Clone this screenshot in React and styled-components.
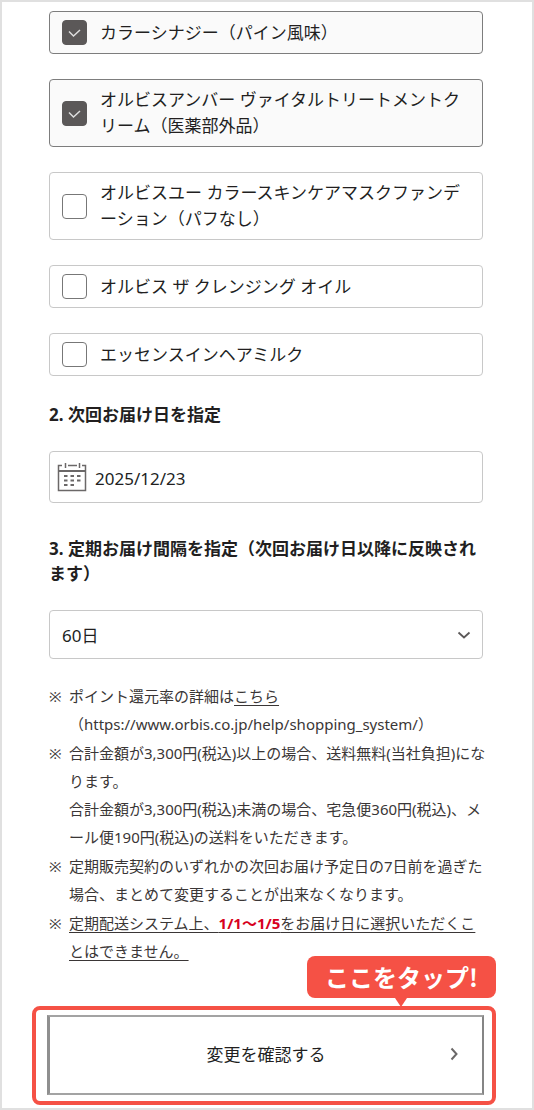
import React, { useState } from 'react'
import styled, { createGlobalStyle } from 'styled-components'

const GlobalStyle = createGlobalStyle`
  * {box-sizing: border-box; margin: 0; padding: 0;}
  body {background-color: #fff;}
  body, input, select, button {
    font-family: "Noto Sans", "Noto Sans CJK JP", sans-serif; font-size: 17px; color: #221f1f;
  }
  ul {list-style: none;}
`

const Page = styled.main`
  min-height: 100vh; padding: 9px 49px 3px 47px;
  border: 2px solid #e0e0e0;
`

const ProductList = styled.ul`
  display: flex; flex-direction: column; gap: 25px;
`

const Product = styled.label`
  display: flex; align-items: center; gap: 13px;
  min-height: 43px; padding: 7px 12px;
  border: 1px solid ${({ $checked }) => ($checked ? '#7d7d7d' : '#c8c8c8')}; border-radius: 4px;
  background-color: ${({ $checked }) => ($checked ? '#fafafa' : '#fff')};
  line-height: 26px; cursor: pointer;
`

const Checkbox = styled.input`
  appearance: none; flex: none; width: 25px; height: 25px;
  border: 1px solid #777; border-radius: 4px; background: #fff;

  &:checked {
    border-color: #5b5858;
    background: #5b5858 url("data:image/svg+xml,%3Csvg xmlns='http://www.w3.org/2000/svg' viewBox='0 0 23 23'%3E%3Cpath d='M6 10.5l4.500 4.500 6.500-6' fill='none' stroke='%23ddd' stroke-width='1.5'/%3E%3C/svg%3E") center / 100%;
  }
`

const Title = styled.h2`
  margin: 26px 0 24px; font-size: 17px; line-height: 25px; font-weight: 700;
`

const Field = styled.div`
  display: flex; align-items: center; position: relative;
  height: ${({ $height }) => $height}px; margin-bottom: ${({ $space }) => $space}px;
  border: 1px solid #c8c8c8; border-radius: 4px;
`

const DateInput = styled.input`
  flex: 1; min-width: 0; height: 100%; padding: 2px 8px 0;
  border: 0; background: none; outline: none;
`

const CalendarIcon = styled.svg`
  flex: none; width: 30px; height: 30px; margin-left: 7px;
`

const Select = styled.select`
  appearance: none; width: 100%; height: 100%; padding: 1px 40px 0 12px;
  border: 0; background: none; outline: none;
`

const Arrow = styled.svg`
  position: absolute; right: 11px; top: 50%; width: 14px; height: 14px;
  transform: translateY(-50%); pointer-events: none;
`

const Notes = styled.ul`
  display: flex; flex-direction: column; gap: 1px; margin-bottom: 41px;
  font-size: 15px; line-height: 28px; white-space: nowrap;
`

const Note = styled.li`
  display: flex; color: #3a3636;

  &::before {content: '※'; flex: none; width: 20px;}

  a {color: inherit; text-underline-offset: 3px;}
  u {text-underline-offset: 3px;}
  strong {color: #d7001d; font-weight: 700;}
`

const TapArea = styled.div`
  position: relative; margin: 0 -13px 0 -17px; padding: 5px 8px 6px 11px;
  border: 4px solid #f55145; border-radius: 8px;
`

const Callout = styled.p`
  position: absolute; right: -4px; bottom: calc(100% + 12px);
  padding: 0 18px; border-radius: 8px; background-color: #f55145;
  color: #fff; font-family: "Noto Sans CJK JP", sans-serif; font-size: 24px; line-height: 42px; font-weight: 700; white-space: nowrap;

  &::after {
    content: ''; position: absolute; top: 100%; left: 50%; margin-left: -7px;
    border: 6px solid transparent; border-top: 9px solid #f55145; border-bottom: 0;
  }
`

const ConfirmButton = styled.button`
  display: block; position: relative; width: 100%; height: 80px; padding-bottom: 4px;
  border: solid; border-width: 2px 2px 2px 3px; border-color: #a3a3a3 #858585 #a3a3a3 #8f8f8f;
  background-color: #fff; cursor: pointer;

  svg {position: absolute; right: 21px; top: 50%; width: 14px; height: 14px; margin-top: -8px;}
`

const PRODUCTS = [
  { id: 1, name: 'カラーシナジー（パイン風味）', checked: true },
  { id: 2, name: 'オルビスアンバー ヴァイタルトリートメントクリーム（医薬部外品）', checked: true },
  { id: 3, name: 'オルビスユー カラースキンケアマスクファンデーション（パフなし）', checked: false },
  { id: 4, name: 'オルビス ザ クレンジング オイル', checked: false },
  { id: 5, name: 'エッセンスインヘアミルク', checked: false },
]

const App = () => {
  const [products, setProducts] = useState(PRODUCTS)
  const [date, setDate] = useState('2025/12/23')
  const [interval, setIntervalDays] = useState('60')

  const onToggle = (id) => {
    setProducts((prev) => prev.map((item) => (item.id === id ? { ...item, checked: !item.checked } : item)))
  }

  return (
    <>
      <GlobalStyle />
      <Page lang="ja">
        <ProductList>
          {products.map((item) => (
            <li key={item.id}>
              <Product $checked={item.checked}>
                <Checkbox type="checkbox" checked={item.checked} onChange={() => onToggle(item.id)} />
                <span>{item.name}</span>
              </Product>
            </li>
          ))}
        </ProductList>

        <Title><label htmlFor="date">2. 次回お届け日を指定</label></Title>
        <Field $height={52} $space={33}>
          <CalendarIcon viewBox="0 0 30 30" fill="none" stroke="#6b6868" aria-hidden="true">
            <path d="M5 3.5H1.500V28.500H28.500V3.500H25M11 3.500H20M8.500 1V6M22.500 1V6" strokeWidth="1.5" />
            <path d="M1.500 9H28.500" strokeWidth="2" />
            <path d="M7 14H10.500M13.500 14H17M20 14H23.500M7 18.500H10.500M13.500 18.500H17M20 18.500H23.500M7 23H10.500M13.500 23H17" strokeWidth="2" />
          </CalendarIcon>
          <DateInput id="date" type="text" value={date} onChange={(e) => setDate(e.target.value)} />
        </Field>

        <Title><label htmlFor="interval">3. 定期お届け間隔を指定（次回お届け日以降に反映されます）</label></Title>
        <Field $height={49} $space={23}>
          <Select id="interval" value={interval} onChange={(e) => setIntervalDays(e.target.value)}>
            <option value="30">30日</option>
            <option value="60">60日</option>
            <option value="90">90日</option>
          </Select>
          <Arrow viewBox="0 0 14 14" fill="none" stroke="#5b5858" strokeWidth="1.8" aria-hidden="true">
            <path d="M1.500 4.500L7 9.500L12.500 4.500" />
          </Arrow>
        </Field>

        <Notes>
          <Note>
            <p>ポイント還元率の詳細は<a href="https://www.orbis.co.jp/help/shopping_system/">こちら</a><br />（https://www.orbis.co.jp/help/shopping_system/）</p>
          </Note>
          <Note>
            <p>
              合計金額が3,300円(税込)以上の場合、送料無料(当社負担)にな<br />ります。<br />
              合計金額が3,300円(税込)未満の場合、宅急便360円(税込)、メ<br />ール便190円(税込)の送料をいただきます。
            </p>
          </Note>
          <Note>
            <p>定期販売契約のいずれかの次回お届け予定日の7日前を過ぎた<br />場合、まとめて変更することが出来なくなります。</p>
          </Note>
          <Note>
            <p><u>定期配送システム上、<strong>1/1～1/5</strong>をお届け日に選択いただくこ<br />とはできません。</u></p>
          </Note>
        </Notes>

        <TapArea>
          <Callout>ここをタップ!</Callout>
          <ConfirmButton type="button">
            変更を確認する
            <svg viewBox="0 0 14 14" fill="none" stroke="#6b6868" strokeWidth="2" aria-hidden="true">
              <path d="M4.500 1.500L9.500 7L4.500 12.500" />
            </svg>
          </ConfirmButton>
        </TapArea>
      </Page>
    </>
  )
}

export default App
